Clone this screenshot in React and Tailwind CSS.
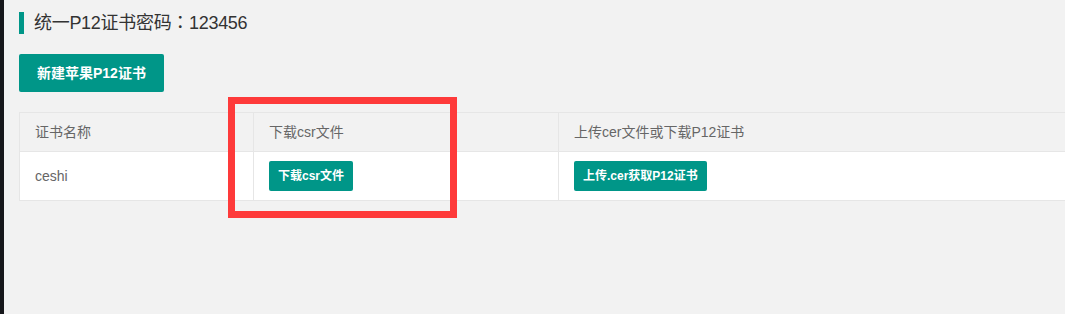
const rows = [{ id: 1, name: 'ceshi' }];

const font = { fontFamily: '"Helvetica Neue", Helvetica, "Liberation Sans", "Noto Sans CJK SC", sans-serif' };
const titleFont = { fontFamily: '"Liberation Sans", "Noto Sans CJK TC", sans-serif' };

export default function App() {
    return (
        <div className="flex h-[314px] w-full overflow-hidden bg-[#f2f2f2]" style={font}>
            <div className="w-[4px] shrink-0 bg-[#16171b]" />
            <div className="relative flex-1 pl-[15px] pt-[12px]">
                <div className="flex h-[22px] items-center border-l-[5px] border-[#009688] pl-[10px]">
                    <span className="text-[18px] leading-none tracking-[-0.3px] text-[#333]" style={titleFont}>
                        统一P12证书密码：123456
                    </span>
                </div>

                <button
                    type="button"
                    className="mt-[20px] h-[38px] rounded-[2px] bg-[#009688] px-[18px] text-[14px] font-bold text-white"
                >
                    新建苹果P12证书
                </button>

                <table className="mt-[20px] w-[1100px] table-fixed border-collapse text-[14px]">
                    <colgroup>
                        <col className="w-[234px]" />
                        <col className="w-[305px]" />
                        <col />
                    </colgroup>
                    <thead className="bg-[#f2f2f2]">
                        <tr>
                            <Th>证书名称</Th>
                            <Th>下载csr文件</Th>
                            <Th>上传cer文件或下载P12证书</Th>
                        </tr>
                    </thead>
                    <tbody className="bg-white">
                        {rows.map((row) => (
                            <tr key={row.id}>
                                <Td>{row.name}</Td>
                                <Td>
                                    <SmallBtn>下载csr文件</SmallBtn>
                                </Td>
                                <Td>
                                    <SmallBtn>上传.cer获取P12证书</SmallBtn>
                                </Td>
                            </tr>
                        ))}
                    </tbody>
                </table>

                {/* annotation box */}
                <div className="pointer-events-none absolute left-[224px] top-[97px] h-[121px] w-[229px] border-[7px] border-[#fe3a3a]" />
            </div>
        </div>
    );
}

function Th({ children }) {
    return (
        <th className="h-[39px] border border-[#e6e6e6] px-[15px] text-left font-normal text-[#666]">{children}</th>
    );
}

function Td({ children }) {
    return <td className="h-[49px] border border-[#e6e6e6] px-[15px] text-left text-[#666]">{children}</td>;
}

function SmallBtn({ children }) {
    return (
        <button type="button" className="h-[30px] rounded-[2px] bg-[#009688] px-[9px] text-[12px] font-bold text-white">
            {children}
        </button>
    );
}
